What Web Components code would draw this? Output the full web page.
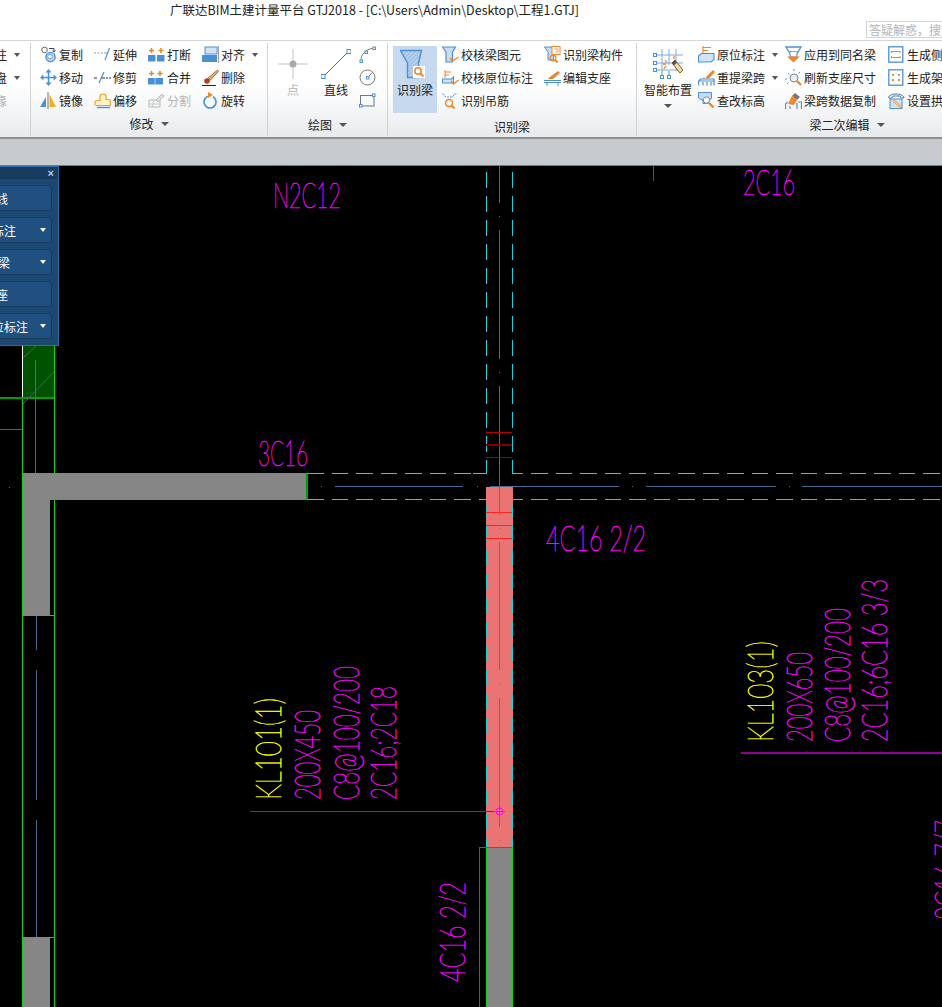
<!DOCTYPE html>
<html lang="zh">
<head>
<meta charset="utf-8">
<title>GTJ2018</title>
<style>
html,body{margin:0;height:100%;overflow:hidden;background:#000}
body{font-family:"Noto Sans CJK SC","Liberation Sans",sans-serif;font-size:12px;color:#111}
app-window{width:942px;height:1007px}
</style>
</head>
<body>
<app-window>
  <title-bar text="广联达BIM土建计量平台 GTJ2018 - [C:\Users\Admin\Desktop\工程1.GTJ]" hint="答疑解惑，搜这里"></title-bar>
  <ribbon-bar>
    <ribbon-group style="width:35px">
      <tool-grid cols="35">
        <tool-btn noicon label="注" caret></tool-btn>
        <tool-btn noicon label="盘" caret></tool-btn>
        <tool-btn noicon label="缘" disabled></tool-btn>
      </tool-grid>
    </ribbon-group>
    <ribbon-group label="修改" caret style="width:236px;--pad:9px">
      <tool-grid cols="54 54 54 60">
        <tool-btn icon="copy" label="复制"></tool-btn>
        <tool-btn icon="extend" label="延伸"></tool-btn>
        <tool-btn icon="break" label="打断"></tool-btn>
        <tool-btn icon="align" label="对齐" caret></tool-btn>
        <tool-btn icon="move" label="移动"></tool-btn>
        <tool-btn icon="trim" label="修剪"></tool-btn>
        <tool-btn icon="merge" label="合并"></tool-btn>
        <tool-btn icon="erase" label="删除"></tool-btn>
        <tool-btn icon="mirror" label="镜像"></tool-btn>
        <tool-btn icon="offset" label="偏移"></tool-btn>
        <tool-btn icon="split" label="分割" disabled></tool-btn>
        <tool-btn icon="rotate" label="旋转"></tool-btn>
      </tool-grid>
    </ribbon-group>
    <ribbon-group label="绘图" caret style="width:119px;--pad:10px">
      <big-btn icon="point" label="点" disabled style="width:30px"></big-btn>
      <big-btn icon="line" label="直线" style="width:36px;margin-left:10px"></big-btn>
      <tool-grid cols="18" style="margin-left:5px">
        <tool-btn icon="arc" label=""></tool-btn>
        <tool-btn icon="circle" label=""></tool-btn>
        <tool-btn icon="rect" label=""></tool-btn>
      </tool-grid>
    </ribbon-group>
    <ribbon-group label="识别梁" style="width:248px;--pad:5px;--foot:3px">
      <big-btn icon="beam" label="识别梁" active style="width:44px"></big-btn>
      <tool-grid cols="102 90" style="margin-left:5px">
        <tool-btn icon="checkbeam" label="校核梁图元"></tool-btn>
        <tool-btn icon="beamcomp" label="识别梁构件"></tool-btn>
        <tool-btn icon="checkmark" label="校核原位标注"></tool-btn>
        <tool-btn icon="support" label="编辑支座"></tool-btn>
        <tool-btn icon="hanger" label="识别吊筋"></tool-btn>
      </tool-grid>
    </ribbon-group>
    <ribbon-group label="梁二次编辑" caret style="width:420px;--pad:7px">
      <big-btn icon="smart" label="智能布置" caret style="width:48px"></big-btn>
      <tool-grid cols="87 103 90" style="margin-left:6px">
        <tool-btn icon="inplace" label="原位标注" caret></tool-btn>
        <tool-btn icon="samename" label="应用到同名梁"></tool-btn>
        <tool-btn icon="sidebar" label="生成侧面筋"></tool-btn>
        <tool-btn icon="respan" label="重提梁跨" caret></tool-btn>
        <tool-btn icon="refresh" label="刷新支座尺寸"></tool-btn>
        <tool-btn icon="erect" label="生成架立筋"></tool-btn>
        <tool-btn icon="elev" label="查改标高"></tool-btn>
        <tool-btn icon="brush" label="梁跨数据复制"></tool-btn>
        <tool-btn icon="arch" label="设置拱梁"></tool-btn>
      </tool-grid>
    </ribbon-group>
  </ribbon-bar>
  <status-strip></status-strip>
  <cad-canvas>
    <float-panel>
      <panel-btn label="提取边线"></panel-btn>
      <panel-btn label="自动提取标注" caret></panel-btn>
      <panel-btn label="自动识别梁" caret></panel-btn>
      <panel-btn label="编辑支座"></panel-btn>
      <panel-btn label="点选识别原位标注" caret></panel-btn>
    </float-panel>
  </cad-canvas>
</app-window>

<script>
const B = '#4a90d9', O = '#f0862a'

const ICONS = {
  copy:`<circle cx="4.500" cy="4" r="2.800" fill="#fff" stroke="#666"/><circle cx="10.500" cy="11" r="4.600" fill="#bcd8f2" stroke="${B}" stroke-width="1.400"/><circle cx="10" cy="10.500" r="2.200" fill="#fff" stroke="${B}" stroke-width=".8"/><path d="M9 2.500h5v3M12.500 4.500l1.500 1.500 1.500-1.500" fill="none" stroke="#444"/>`,
  move:`<path d="M8.500 3v11M3 8.500h11" stroke="${B}" stroke-width="1.500"/><path d="M8.500 0l3 3.400h-6zM8.500 17l3-3.400h-6zM0 8.500l3.400-3v6zM17 8.500l-3.400-3v6z" fill="${B}"/>`,
  mirror:`<path d="M0 15L6 5v10z" fill="${B}"/><path d="M9.500 2v13H16z" fill="#f5b022"/><path d="M8 0v17" stroke="#777"/>`,
  extend:`<path d="M0 7h2M3.500 7h2M7 7h2" stroke="#8a9aaa"/><path d="M11 14L15.500 2" stroke="${B}" stroke-width="1.200"/><path d="M10 7h3" stroke="#8a9aaa"/>`,
  trim:`<path d="M0 9h3M12 9h2M15 9h2" stroke="#224"/><path d="M5 14L10 3" stroke="${B}" stroke-width="1.300"/><path d="M8 9h3" stroke="#224"/>`,
  offset:`<path d="M1 13V10.500C1 9 2 8.500 4 8.500H6V4.500C6 3 7 2 9 2S12 3 12 4.500V7.500H14.500C16 7.500 16.500 8.500 16.500 10V13.500H1.500" fill="#fff3c8" stroke="#f0a020" stroke-width="1.200"/><path d="M3 15.500H16" stroke="${B}" stroke-width="1.400"/>`,
  break:`<rect x="0" y="9" width="7.500" height="6.500" fill="${B}"/><rect x="9" y="9" width="7.500" height="6.500" fill="${B}"/><path d="M3.500 2v5M1 4.500h5M13 2v5M10.500 4.500h5" stroke="#e08a1e" stroke-width="1.500"/>`,
  merge:`<rect x="0" y="9" width="15" height="6.500" fill="${B}"/><path d="M7 9v6.500" stroke="#a8cdf0"/><path d="M3.500 2v5M1 4.500h5M12 2v5M9.500 4.500h5" stroke="#e08a1e" stroke-width="1.500"/>`,
  split:`<path d="M1 8h11v7H1z" fill="none" stroke="#aaa"/><path d="M1 12h12M4 15l2-7" stroke="#bbb"/><path d="M8 8l6-6 2 2-6 6z" fill="#ddd" stroke="#aaa"/>`,
  align:`<rect x="3" y="1" width="12" height="7" fill="#d2e3f5" stroke="${B}"/><rect x="0" y="9" width="15" height="7" fill="${B}"/><path d="M16.500 0v17" stroke="#99a"/>`,
  erase:`<path d="M15.500 1l1 1.500-8.500 9-2.500-2z" fill="#d8b080" stroke="#8a5a2a" stroke-width=".8"/><circle cx="5" cy="12" r="2.800" fill="#b5411c"/><path d="M0 16.500h14" stroke="#222"/>`,
  rotate:`<circle cx="8" cy="10" r="6" fill="none" stroke="${B}" stroke-width="1.600" stroke-dasharray="33 5" transform="rotate(-60 8 10)"/><path d="M6 0v6l5-3z" fill="${O}"/>`,
  point:`<svg viewBox="0 0 30 30"><path d="M15 0v30M0 15h30" stroke="#c4c4c4"/><circle cx="15" cy="15" r="3.500" fill="#a8a8a8"/></svg>`,
  line:`<svg viewBox="0 0 30 30"><path d="M2 28L28 2" stroke="#666"/><rect x="0" y="25.500" width="4" height="4" fill="#fff" stroke="${B}"/><rect x="26" y=".5" width="4" height="4" fill="#fff" stroke="${B}"/></svg>`,
  arc:`<path d="M2 15C2 8 6 4 14 2" fill="none" stroke="#777"/><g fill="#fff" stroke="${B}"><rect x="1" y="14" width="2.500" height="2.500"/><rect x="6" y="5" width="2.500" height="2.500"/><rect x="14" y="1" width="2.500" height="2.500"/></g>`,
  circle:`<circle cx="8.500" cy="8.500" r="7.500" fill="#fff" stroke="#777"/><path d="M8.500 8.500l5-5" stroke="#777"/><rect x="7.500" y="7.500" width="2.500" height="2.500" fill="#fff" stroke="${B}"/>`,
  rect:`<rect x="1.500" y="3.500" width="13.500" height="10.500" fill="none" stroke="#777"/><rect x="0.500" y="12.500" width="2.500" height="2.500" fill="#fff" stroke="${B}"/><rect x="13.500" y="2" width="2.500" height="2.500" fill="#fff" stroke="${B}"/>`,
  beam:`<svg viewBox="0 0 30 30"><defs><pattern id="h" width="3" height="3" patternUnits="userSpaceOnUse" patternTransform="rotate(-45)"><rect width="3" height="3" fill="#b7cfe9"/><path d="M0 0h3" stroke="#7ba8d8"/></pattern></defs><path d="M.5 1.500h21l-3 12.500v14.500H7.500V14z" fill="url(#h)" stroke="${B}" stroke-width="1.400"/><rect x="13" y="17" width="12" height="12" fill="#fff"/><circle cx="18" cy="22" r="3.200" fill="none" stroke="${O}" stroke-width="1.500"/><path d="M20.500 24.500l3 3" stroke="${O}" stroke-width="2"/></svg>`,
  checkbeam:`<path d="M.5 1h13l-3 5v10H4V6z" fill="#c8dcf2" stroke="${B}" stroke-width="1.200"/><path d="M8 12l2.500 3 6-4" fill="none" stroke="${O}" stroke-width="1.500"/>`,
  checkmark:`<path d="M3 1v8M3 3h6M3 6h4" stroke="${O}"/><path d="M.5 10h9l2-2v6H.5z" fill="#d2e3f5" stroke="${B}" stroke-width="1.100"/><path d="M9 12l2.500 3 5-4" fill="none" stroke="${O}" stroke-width="1.500"/>`,
  hanger:`<path d="M.5 2h1l2 3h7l2-3h3" fill="none" stroke="${B}" stroke-dasharray="2 1"/><circle cx="7" cy="11" r="3.500" fill="none" stroke="${O}" stroke-width="1.500"/><path d="M9.500 13.500l3 3" stroke="${O}" stroke-width="2"/>`,
  beamcomp:`<path d="M.5 1h11l-2 5v8H4V6z" fill="#c8dcf2" stroke="${B}"/><rect x="8" y="0.500" width="8" height="8" fill="#fff" stroke="${O}"/><path d="M10 3h4v3h-3" fill="none" stroke="${O}" stroke-width=".8"/><circle cx="9" cy="12" r="2.800" fill="none" stroke="${O}" stroke-width="1.300"/><path d="M11 14l2.500 2.500" stroke="${O}" stroke-width="1.800"/>`,
  support:`<path d="M5 8.500L14 2l2 2-7 6H4z" fill="${O}"/><path d="M0 11.500h17M0 13.500h17" stroke="${B}"/><path d="M3 14v3M14 14v3" stroke="${B}"/>`,
  smart:`<svg viewBox="0 0 30 30"><path d="M9 0v22M16 0v16M23 0v22M2 6h28M2 14h28M2 21h24" stroke="#7aaade"/><g fill="#fff" stroke="${B}"><rect x="0.500" y="4.500" width="3" height="3"/><rect x="0.500" y="12.500" width="3" height="3"/><rect x="0.500" y="19.500" width="3" height="3"/><rect x="7.500" y="26.500" width="3" height="3"/><rect x="14.500" y="26.500" width="3" height="3"/></g><path d="M9 22v5M16 22v5" stroke="${B}"/><path d="M19 14l3-3 8 10-3 3z" fill="#f5d8a0" stroke="#8a5a2a"/><path d="M19 14l3-3 2 2.500-3 3z" fill="#555"/><path d="M12 11l2 3m-3 6l2-3m-3-2h3M21 10v-3" stroke="${O}" stroke-width="1.300"/></svg>`,
  inplace:`<path d="M5 0v8M5 1.500h8M5 4.500h5" stroke="${O}" stroke-width="1.200"/><path d="M.5 10l3-2.500h12.500v6l-3 2.500H.5z" fill="#d2e3f5" stroke="${B}" stroke-width="1.100"/>`,
  respan:`<path d="M8 8L15 1l2 2-6 6.500H8z" fill="${O}"/><path d="M5 9l2 .500" stroke="${O}"/><path d="M.5 16.500V12l2-2H16v6.500M5 16.500V13M9 16.500V13M13 16.500V13M.5 12H16" fill="none" stroke="${B}" stroke-width="1.200"/>`,
  elev:`<path d="M.5 .5h13v6l-3 2v3H5v-3L.5 6z" fill="#c8dcf2" stroke="${B}"/><circle cx="8.500" cy="8" r="3.200" fill="#fff" stroke="#7a8a9a"/><path d="M11 11l4.500 4.500" stroke="${O}" stroke-width="2.400"/>`,
  samename:`<path d="M1 1h15l-3 5H4z" fill="#fff" stroke="${B}" stroke-width="1.300"/><path d="M4.500 6l1 5h6l1-5" fill="#fff" stroke="${B}" stroke-width="1.200"/><path d="M2 10.500h13l-6.500 6z" fill="${O}"/>`,
  refresh:`<circle cx="9" cy="9" r="4" fill="#e8eef5" stroke="#7a8a9a"/><path d="M12 12l4 4" stroke="${O}" stroke-width="2.400"/><path d="M9 0v3M3 4l2 2M15 3l-2 2M0 10h3M2 15l2-2" stroke="${B}" stroke-dasharray="2 1"/>`,
  brush:`<path d="M10 1l5 4-3 3-5-4z" fill="#777"/><path d="M7 4l5 4-3 5-6-1z" fill="${O}"/><path d="M.5 17v-5l2-2M16.500 17V10H13M5 17v-3M12 17v-6" fill="none" stroke="${B}" stroke-width="1.200"/>`,
  sidebar:`<rect x=".8" y=".8" width="14" height="15.400" fill="#fff" stroke="${B}" stroke-width="1.300"/><path d="M3.500 7V5.500h8.500V7M3.500 10v1.500h8.500V10" fill="none" stroke="${O}" stroke-width="1.200"/>`,
  erect:`<rect x=".8" y=".8" width="14" height="15.400" fill="#fff" stroke="${B}" stroke-width="1.300"/><g fill="${O}"><rect x="4" y="5" width="2" height="2"/><rect x="10" y="5" width="2" height="2"/><rect x="4" y="10" width="2" height="2"/><rect x="10" y="10" width="2" height="2"/></g>`,
  arch:`<path d="M.5 5C3 1 13 1 16 5v1H13L12 4H5L4 6H1z" fill="#fff" stroke="#4a7aa8"/><rect x="2" y="7" width="12" height="9.500" fill="#d2e3f5" stroke="${B}"/><path d="M6 8l7 6 1.500 2-2.500-.5-7-6z" fill="#f5d090" stroke="${O}" stroke-width=".7"/>`
}

class TitleBar extends HTMLElement{
  constructor(){
    super()
    this.attachShadow({mode:'open'})
  }
  connectedCallback(){
    this.shadowRoot.innerHTML = `
      <style>
      :host{display:flex;height:40px;background:#fff;border-bottom:1px solid #d6d6d6;padding-left:170px;overflow:hidden;flex:none}
      .t{font-size:12.5px;line-height:17px;margin-top:1px;white-space:nowrap;color:#222}
      .s{margin-left:auto;align-self:flex-end;margin-bottom:2px;width:73px;height:15px;border:1px solid #d5d5d5;border-right:0;
         font-size:12px;line-height:15px;color:#b4b4b4;white-space:nowrap;overflow:hidden;padding-left:2px;flex:none}
      </style>
      <div class="t">${this.getAttribute('text')}</div>
      <div class="s">${this.getAttribute('hint')}</div>`
  }
}

class RibbonBar extends HTMLElement{
  constructor(){
    super()
    this.attachShadow({mode:'open'}).innerHTML = `
      <style>
      :host{display:flex;flex:none;height:98px;overflow:hidden;box-sizing:border-box;padding-top:2px;
        background:linear-gradient(#fff 0,#fff 45%,#e8ebed 100%);border-bottom:2px solid #8e9092;margin-left:-5px}
      </style><slot></slot>`
  }
}

class RibbonGroup extends HTMLElement{
  constructor(){
    super()
    this.attachShadow({mode:'open'})
  }
  connectedCallback(){
    const label = this.getAttribute('label') || ''
    this.shadowRoot.innerHTML = `
      <style>
      :host{display:flex;flex:none;flex-direction:column;box-sizing:content-box;border-right:1px solid #d0d3d6;margin-bottom:1px}
      .body{flex:1;display:flex;align-items:flex-start;padding:0 0 0 var(--pad,0)}
      .foot{height:24px;flex:none;display:flex;align-items:center;justify-content:center;gap:7px;font-size:12px;color:#222;
        padding:var(--foot,0) 0 1px;box-sizing:border-box}
      i{width:0;height:0;border:4px solid transparent;border-top:4px solid #555;border-bottom:0;margin-top:1px}
      </style>
      <div class="body"><slot></slot></div>
      <div class="foot">${label}${this.hasAttribute('caret') ? '<i></i>' : ''}</div>`
  }
}

class ToolGrid extends HTMLElement{
  constructor(){
    super()
    this.attachShadow({mode:'open'}).innerHTML = `
      <style>
      :host{display:grid;flex:none;grid-auto-rows:23px}
      </style><slot></slot>`
  }
  connectedCallback(){
    this.style.gridTemplateColumns = this.getAttribute('cols').split(' ').map(c => c + 'px').join(' ')
  }
}

class ToolBtn extends HTMLElement{
  constructor(){
    super()
    this.attachShadow({mode:'open'})
  }
  connectedCallback(){
    const name = this.getAttribute('icon')
    const off = this.hasAttribute('disabled')
    const icon = name ? `<svg class="ic" width="17" height="17" viewBox="0 0 17 17">${ICONS[name]}</svg>` : ''
    this.shadowRoot.innerHTML = `
      <style>
      :host{display:flex;align-items:center;gap:2px;white-space:nowrap;color:${off ? '#b5b5b5' : '#222'};font-size:12px;height:23px}
      .ic{flex:none;${off ? 'opacity:.8' : ''}}
      i{width:0;height:0;border:3px solid transparent;border-top:4px solid #555;border-bottom:0;margin:1px 0 0 5px}
      </style>
      ${icon}<span>${this.getAttribute('label')}</span>${this.hasAttribute('caret') ? '<i></i>' : ''}`
  }
}

class BigBtn extends HTMLElement{
  constructor(){
    super()
    this.attachShadow({mode:'open'})
  }
  connectedCallback(){
    const off = this.hasAttribute('disabled')
    const on = this.hasAttribute('active')
    this.shadowRoot.innerHTML = `
      <style>
      :host{display:flex;flex:none;flex-direction:column;align-items:center;height:67px;margin-top:3px;box-sizing:border-box;padding-top:3px;
        white-space:nowrap;font-size:12px;color:${off ? '#b5b5b5' : '#222'};background:${on ? '#c7d9ef' : 'transparent'}}
      .ic{width:30px;height:30px;flex:none}
      .ic svg{display:block;width:30px;height:30px}
      span{margin-top:2px;line-height:18px}
      i{width:0;height:0;border:4px solid transparent;border-top:4px solid #555;border-bottom:0;margin-top:5px}
      </style>
      <div class="ic">${ICONS[this.getAttribute('icon')]}</div>
      <span>${this.getAttribute('label')}</span>${this.hasAttribute('caret') ? '<i></i>' : ''}`
  }
}

class StatusStrip extends HTMLElement{
  constructor(){
    super()
    this.attachShadow({mode:'open'}).innerHTML = `
      <style>
      :host{display:block;flex:none;height:26px;background:#c8cbce;border-bottom:1px solid #77797b}
      </style>`
  }
}

class FloatPanel extends HTMLElement{
  constructor(){
    super()
    this.attachShadow({mode:'open'}).innerHTML = `
      <style>
      :host{position:absolute;left:-102px;top:0;width:159px;height:178px;display:flex;flex-direction:column;
        background:#1c4871;border:1px solid #2f6ca8;color:#fff}
      .head{height:12px;flex:none;background:#193b5e;display:flex;justify-content:flex-end;align-items:center;padding-right:4px;
        font:bold 11px/12px "Liberation Sans",sans-serif;color:#a9cdf0}
      .list{display:flex;flex-direction:column;gap:6px;padding:6px 6px 0 9px}
      </style>
      <div class="head">×</div>
      <div class="list"><slot></slot></div>`
  }
}

class PanelBtn extends HTMLElement{
  constructor(){
    super()
    this.attachShadow({mode:'open'})
  }
  connectedCallback(){
    const caret = this.hasAttribute('caret')
    this.shadowRoot.innerHTML = `
      <style>
      :host{display:flex;align-items:center;justify-content:center;height:26px;box-sizing:border-box;position:relative;
        background:#20507f;border:1px solid #183c60;border-radius:3px;font-size:12px;color:#fff;white-space:nowrap;
        padding-left:${caret ? 0 : 8}px}
      i{position:absolute;right:5px;top:10px;width:0;height:0;border:3.500px solid transparent;border-top:4px solid #fff;border-bottom:0}
      </style>
      <span>${this.getAttribute('label')}</span>${caret ? '<i></i>' : ''}`
  }
}

const MAG = '#ff00ff', YEL = '#ffff00'

// x,y = start of the text, len = its drawn length, up = rotated reading upward
const LABELS = [
  ['N2C12',273,208,68,0,MAG],
  ['2C16',743,195,52,0,MAG],
  ['3C16',258,466,50,0,MAG],
  ['4C16 2/2',546,551,100,0,MAG],
  ['KL101(1)',281,800,102,1,YEL],
  ['200X450',320,800,90,1,MAG],
  ['C8@100/200',359,800,134,1,MAG],
  ['2C16;2C18',396,800,114,1,MAG],
  ['4C16 2/2',465,982,100,1,MAG],
  ['KL103(1)',773,742,101,1,YEL],
  ['200X650',812,742,90,1,MAG],
  ['C8@100/200',850,742,134,1,MAG],
  ['2C16;6C16 3/3',887,742,163,1,MAG],
  ['2C16 7/7',960,920,100,1,MAG]
]

class CadCanvas extends HTMLElement{
  constructor(){
    super()
    this.attachShadow({mode:'open'})
  }
  connectedCallback(){
    const labels = LABELS.map(([t,x,y,len,up,c]) =>
      `<text x="${x}" y="${y}" fill="${c}" stroke="${c}" textLength="${len}" lengthAdjust="spacingAndGlyphs"${up ? ` transform="rotate(-90 ${x} ${y})"` : ''}>${t}</text>`).join('')
    const CY = '#12d6dc', AX = '#4a6a92', GR = '#00e000', DG = '#00a000', W = '#868686'
    this.shadowRoot.innerHTML = `
      <style>
      :host{display:block;position:relative;flex:1;background:#000;overflow:hidden}
      svg{display:block}
      text{font-family:"Lato","Liberation Sans",sans-serif;font-weight:100;font-size:36px;white-space:pre;stroke-width:.7px}
      </style>
      <svg width="942" height="841" viewBox="0 166 942 841" shape-rendering="crispEdges">
        <!-- left wall -->
        <rect x="23" y="346" width="31" height="51" fill="#005200"/>
        <path d="M22.500 346V397" stroke="#fff"/>
        <path d="M54.500 346V1007M22.500 397V1007" stroke="${GR}"/>
        <path d="M0 397.500H54" stroke="${DG}" stroke-width="2"/>
        <path d="M0 429.500H22" stroke="${DG}"/>
        <path d="M23 358L36 346M23 404L54 372" stroke="#46617a" shape-rendering="auto"/>
        <path d="M35.500 360V473M36.500 615V650M36.500 670V800M36.500 820V937" stroke="${AX}"/>
        <rect x="23" y="473" width="283" height="27" fill="${W}"/>
        <rect x="23" y="500" width="26" height="115" fill="${W}"/>
        <rect x="23" y="937" width="26" height="70" fill="${W}"/>
        <path d="M23 473.500H306.500V500M49 499.500H306M49.500 500V615M23 615.500H54M23 937.500H54M49.500 937V1007" fill="none" stroke="${GR}"/>
        <path d="M306.500 473V500" stroke="${DG}" stroke-width="2"/>
        <path d="M9 487h1" stroke="${AX}"/>

        <!-- column axis and beam edges -->
        <path d="M499.500 166V203M499.500 216v1M499.500 230V359M499.500 372v1M499.500 386V487" stroke="${AX}"/>
        <path d="M486.500 172V462M512.500 172V462" stroke="${CY}" stroke-dasharray="16 8"/>
        <path d="M473 473.500H486.500V462M512.500 462V473.500H523" fill="none" stroke="${CY}"/>
        <path d="M307 473.500H473M307 499.500H486" stroke="${CY}" stroke-dasharray="16.500 8"/>
        <path d="M531 473.500H942M512 499.500H523M531 499.500H942" stroke="${CY}" stroke-dasharray="16.500 8"/>
        <path d="M486 432.500H512" stroke="#c00000"/>
        <path d="M486 445H512" stroke="#800000" stroke-width="2"/>
        <path d="M486 457.500H512" stroke="#a00000"/>
        <path d="M307 486.500h1M321 486.500h1M335 486.500H463M477 486.500h1M490 486.500H619M632 486.500h1M646 486.500H776M789 486.500h1M802 486.500H942" stroke="${AX}"/>

        <!-- selected beam -->
        <rect x="486" y="487" width="27" height="360" fill="#ea7474"/>
        <path d="M486.500 505V847M512.500 505V847" stroke="${CY}" stroke-dasharray="16 8" stroke-dashoffset="4"/>
        <path d="M486 512.500H512M486 525.500H512M486 538.500H512" stroke="#ff2020"/>
        <path d="M499.500 487V515M499.500 528v1M499.500 542V670M499.500 684v1M499.500 698V827M499.500 840v1" stroke="#6f6f86"/>
        <rect x="486" y="847" width="27" height="160" fill="${W}"/>
        <path d="M486.500 847V1007M512.500 847V1007" stroke="${GR}"/>
        <path d="M479.500 1007V847.500H512" fill="none" stroke="${DG}"/>

        <!-- leaders -->
        <path d="M250 811.500H499" stroke="#b000b0"/>
        <circle cx="499.500" cy="811.500" r="3.500" fill="none" stroke="${MAG}" shape-rendering="auto"/>
        <path d="M499.500 806V817M494 811.500H505" stroke="${MAG}"/>
        <path d="M741 752.500H942" stroke="#900090" stroke-width="2"/>
        <path d="M653.500 166V181" stroke="#555"/>
        <g shape-rendering="auto">${labels}</g>
      </svg>
      <slot></slot>`
  }
}

class AppWindow extends HTMLElement{
  constructor(){
    super()
    this.attachShadow({mode:'open'}).innerHTML = `
      <style>
      :host{display:flex;flex-direction:column;overflow:hidden}
      </style><slot></slot>`
  }
}

customElements.define('title-bar',TitleBar)
customElements.define('ribbon-bar',RibbonBar)
customElements.define('ribbon-group',RibbonGroup)
customElements.define('tool-grid',ToolGrid)
customElements.define('tool-btn',ToolBtn)
customElements.define('big-btn',BigBtn)
customElements.define('status-strip',StatusStrip)
customElements.define('float-panel',FloatPanel)
customElements.define('panel-btn',PanelBtn)
customElements.define('cad-canvas',CadCanvas)
customElements.define('app-window',AppWindow)
</script>
</body>
</html>
